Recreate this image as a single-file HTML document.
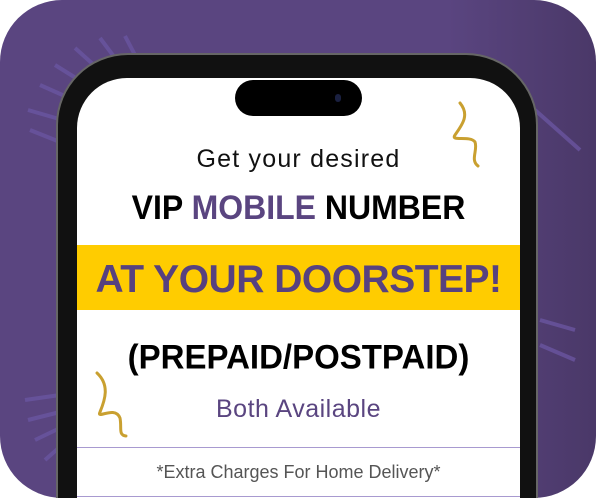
<!DOCTYPE html>
<html><head><style>
html,body{margin:0;padding:0;background:#fff;width:596px;height:498px;overflow:hidden;}
body{position:relative;font-family:"Liberation Sans",sans-serif;}
.bg{position:absolute;left:0;top:0;width:596px;height:498px;border-radius:62px;background:linear-gradient(90deg,#5a4580 0%,#5a4580 75%,#4a3868 100%);overflow:hidden;}
.phone{position:absolute;left:58px;top:55px;width:478px;height:443px;border-radius:70px 70px 0 0;background:#111;box-shadow:0 0 0 2px #666;}
.screen{position:absolute;left:77px;top:78px;width:443px;height:420px;border-radius:50px 50px 0 0;background:#fff;overflow:hidden;}
.island{position:absolute;left:235px;top:80px;width:127px;height:36px;border-radius:18px;background:#000;}
.c{position:absolute;left:77px;width:443px;text-align:center;white-space:nowrap;line-height:1;}
</style></head><body>
<div class="bg">
<svg width="596" height="498" style="position:absolute;left:0;top:0">
<g stroke="#6a55a0" stroke-width="4" opacity="0.8">
<line x1="30" y1="130" x2="80" y2="150"/><line x1="28" y1="110" x2="80" y2="125"/><line x1="40" y1="85" x2="85" y2="105"/><line x1="55" y1="65" x2="95" y2="90"/><line x1="75" y1="48" x2="105" y2="75"/><line x1="100" y1="38" x2="118" y2="62"/><line x1="125" y1="36" x2="135" y2="55"/>
<line x1="25" y1="400" x2="60" y2="395"/><line x1="28" y1="420" x2="60" y2="412"/><line x1="35" y1="440" x2="60" y2="428"/><line x1="45" y1="460" x2="62" y2="445"/>
<line x1="535" y1="110" x2="580" y2="150"/><line x1="540" y1="320" x2="575" y2="330"/><line x1="540" y1="345" x2="575" y2="360"/>
</g></svg>
</div>
<div class="phone"></div>
<div class="screen"></div>
<div class="island"></div>
<div style="position:absolute;left:335px;top:94px;width:6px;height:8px;border-radius:3px;background:#1a2040"></div>
<div class="c" style="top:147px;font-size:25px;letter-spacing:1.2px;color:#111;">Get your desired</div>
<div class="c" style="top:191px;font-size:32px;font-weight:bold;color:#000;transform:scaleY(1.08);">VIP <span style="color:#5a4580">MOBILE</span> NUMBER</div>
<div style="position:absolute;left:77px;top:245px;width:443px;height:65px;background:#ffcc00;"></div>
<div class="c" style="top:260px;font-size:39px;font-weight:bold;color:#57417f;letter-spacing:-0.5px;">AT YOUR DOORSTEP!</div>
<div class="c" style="top:340px;font-size:33px;font-weight:bold;color:#000;transform:scaleY(1.05);">(PREPAID/POSTPAID)</div>
<div class="c" style="top:397px;font-size:25px;letter-spacing:0.5px;color:#5a4580;">Both Available</div>
<div style="position:absolute;left:77px;top:447px;width:443px;height:1px;background:#a89ad0;"></div>
<div class="c" style="top:463px;font-size:18px;color:#555;">*Extra Charges For Home Delivery*</div>
<div style="position:absolute;left:77px;top:496px;width:443px;height:1px;background:#a89ad0;"></div>
<svg width="596" height="498" style="position:absolute;left:0;top:0" fill="none" stroke="#c9a030" stroke-width="3" stroke-linecap="round">
<path d="M460 103 C470 115 462 125 455 135 C450 142 470 135 475 142 C478 150 470 160 478 166"/>
<path d="M97 373 C110 385 105 400 100 412 C96 420 115 405 120 418 C122 428 118 435 126 436"/>
</svg>
</body></html>
